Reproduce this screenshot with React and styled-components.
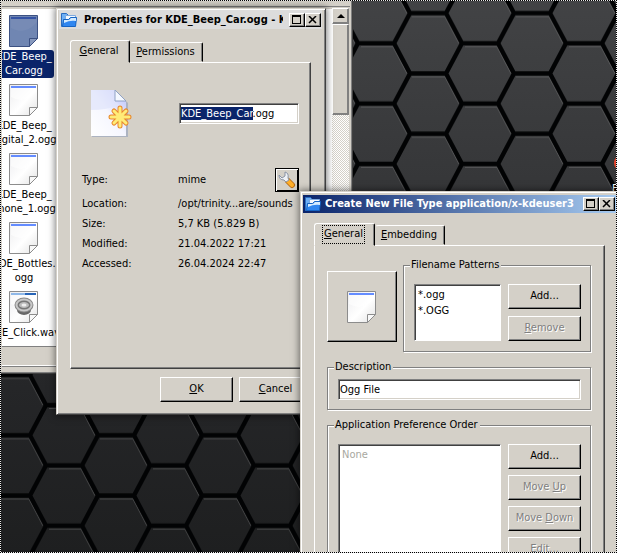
import React, { useEffect, useRef } from "react";
import styled, { createGlobalStyle, css } from "styled-components";

const face = "#d4d0c8";
const shade = "#808080";
const navy = "#0a246a";

const Global = createGlobalStyle`
  * { box-sizing: border-box; }
  html, body, #root { height: 100%; margin: 0; }
  body { overflow: hidden; background: #222; }
  body, button, input {
    font-family: "DejaVu Sans Condensed", "Noto Sans", sans-serif;
    font-size: 11px;
    line-height: 14px;
    color: #000;
  }
  h2, dl, dd, dt, ul { margin: 0; padding: 0; list-style: none; }
`;

const Desktop = styled.main`
  position: relative;
  width: 100%;
  height: 100%;
  overflow: hidden;
  background: #242527;
`;

const Wallpaper = styled.svg`
  position: absolute;
  inset: 0;
  width: 100%;
  height: 100%;
`;

const dots = (angle) => `repeating-linear-gradient(${angle}, #000 0 1px, #e8e8e8 1px 2px)`;

const Marquee = styled.div`
  position: absolute;
  inset: 0;
  pointer-events: none;
  background:
    ${dots("90deg")} top / 100% 1px no-repeat,
    ${dots("90deg")} bottom / 100% 1px no-repeat,
    ${dots("180deg")} left / 1px 100% no-repeat,
    ${dots("180deg")} right / 1px 100% no-repeat;
`;

const Window = styled.section`
  position: absolute;
  display: flex;
  flex-direction: column;
  background: ${face};
  border: 1px solid;
  border-color: ${face} #404040 #404040 ${face};
`;

const FileManager = styled(Window)`
  left: -20px;
  top: -20px;
  width: 373px;
  height: 394px;
  padding: 25px 2px 2px 21px;
  box-shadow: inset -1px -1px 0 ${shade};
`;

const Dialog = styled(Window)`
  left: 56px;
  top: 8px;
  width: 270px;
  height: 407px;
  padding: 1px 3px 12px 2px;
  box-shadow: inset 1px 1px 0 #fff, inset -1px -1px 0 ${shade}, 0 0 7px 1px rgba(0, 0, 0, 0.5);
`;

const FileTypeDialog = styled(Window)`
  left: 300px;
  top: 191px;
  right: -2px;
  height: 410px;
  padding: 3px 2px 11px;
  box-shadow: inset 1px 1px 0 #fff, 0 0 7px 1px rgba(0, 0, 0, 0.5);
`;

const Viewport = styled.div`
  display: flex;
  height: 340px;
  flex: none;
  border-top: 1px solid ${shade};
  box-shadow: 0 1px 0 ${shade};
`;

const FileList = styled.ul`
  flex: 1;
  min-width: 0;
  overflow: hidden;
  background: #fff;
  border-top: 2px solid ${face};
`;

const FileItem = styled.li`
  display: flex;
  flex-direction: column;
  align-items: center;
  gap: 3px;
  width: 62px;
  height: 69px;
  margin-left: -9px;
  padding-top: 6px;
`;

const FileLabel = styled.span`
  padding: 0 2px;
  text-align: center;
  white-space: pre;
  border-radius: 3px;
  ${(p) => p.$selected && css`background: ${navy}; color: #fff;`}
`;

const StatusBar = styled.div`
  height: 19px;
  margin-top: 1px;
  border-bottom: 1px solid #fff;
  box-shadow: 0 1px 0 ${shade};
`;

const ScrollBar = styled.div`
  display: flex;
  flex-direction: column;
  width: 17px;
  margin: 1px 1px 0 0;
  background: repeating-conic-gradient(#fff 0 25%, ${face} 0 50%) 0 0 / 2px 2px;
`;

const bevel = css`
  background: ${face};
  border: 1px solid;
  border-color: #fff #000 #000 #fff;
  box-shadow: inset -1px -1px 0 ${shade};
`;

const ScrollButton = styled.button`
  ${bevel}
  display: grid;
  place-items: center;
  height: 16px;
  padding: 0;
  border-color: #fff ${shade} ${shade} #fff;
`;

const ScrollThumb = styled.div`
  ${bevel}
  height: 91px;
  border-color: #fff ${shade} ${shade} #fff;
`;

const TitleBar = styled.header`
  display: flex;
  flex: none;
  align-items: center;
  gap: ${(p) => (p.$active ? 3 : 6)}px;
  height: ${(p) => (p.$active ? 18 : 19)}px;
  padding: 0 1px 0 2px;
  color: ${(p) => (p.$active ? "#fff" : "#000")};
  background: ${(p) => (p.$active ? `linear-gradient(90deg, ${navy}, #a6caf0)` : "#dcdcdc")};
`;

const Title = styled.h2`
  flex: 1;
  min-width: 0;
  overflow: hidden;
  white-space: nowrap;
  font-size: 11px;
  font-weight: bold;
  line-height: 16px;
`;

const TitleButtons = styled.div`
  display: flex;
`;

const TitleButton = styled.button`
  ${bevel}
  display: grid;
  place-items: center;
  width: 16px;
  height: 14px;
  padding: 0;
`;

const Tabs = styled.div`
  display: flex;
  align-items: flex-end;
  height: 22px;
  margin: ${(p) => p.$top}px 11px 0;
  flex: none;
`;

const Tab = styled.button`
  position: relative;
  flex: none;
  width: ${(p) => p.$width}px;
  height: ${(p) => (p.$selected ? 22 : 20)}px;
  padding: 0 2px 0 0;
  background: ${face};
  border: 1px solid;
  border-color: #fff #000 transparent #fff;
  border-radius: 3px 2px 0 0;
  box-shadow: inset -1px 0 0 ${shade};
  ${(p) => p.$selected && css`
    z-index: 1;
    height: 23px;
    margin-bottom: -1px;
    border-bottom-color: ${face};
  `}
  ${(p) => !p.$selected && css`border-left-color: ${face};`}
`;

const TabText = styled.span`
  display: inline-block;
  padding: 1px 1px 2px;
  outline: ${(p) => (p.$focus ? "1px dotted #000" : "none")};
`;

const Panel = styled.div`
  flex: 1;
  margin: 0 11px;
  border: 1px solid;
  border-color: #fff #404040 #404040 #fff;
  box-shadow: inset -1px -1px 0 ${shade};
`;

const PropertiesPanel = styled(Panel)`
  padding: 27px 11px 0 11px;
`;

const NameRow = styled.div`
  display: flex;
  justify-content: space-between;
  padding-left: 9px;
  height: 75px;
`;

const TextBox = styled.input`
  width: ${(p) => p.$width};
  height: 21px;
  padding: 0 1px;
  background: #fff;
  border: 1px solid;
  border-color: ${shade} #fff #fff ${shade};
  border-radius: 0;
  outline: none;
  box-shadow: inset 1px 1px 0 #404040, inset -1px -1px 0 ${face};
  &::selection { background: ${navy}; color: #fff; }
`;

const NameBox = styled(TextBox)`
  margin-top: 13px;
`;

const Facts = styled.dl`
  display: grid;
  grid-template-columns: 96px 1fr;
  grid-template-rows: 29px repeat(4, 20px);
  align-items: center;
  white-space: nowrap;
`;

const TypeValue = styled.dd`
  display: flex;
  align-items: center;
  justify-content: space-between;
`;

const WrenchButton = styled.button`
  ${bevel}
  display: grid;
  place-items: center;
  width: 24px;
  height: 24px;
  padding: 0;
  border: 1px solid #000;
  box-shadow: inset 1px 1px 0 #fff, inset -1px -1px 0 #000;
`;

const DialogButtons = styled.footer`
  display: flex;
  justify-content: flex-end;
  gap: 6px;
  margin: 8px 10px 0;
`;

const PushButton = styled.button`
  ${bevel}
  width: 73px;
  height: 25px;
  padding: 0 0 1px;
  &:disabled {
    color: ${shade};
    text-shadow: 1px 1px 0 #fff;
  }
`;

const TypePanel = styled(Panel)`
  display: flex;
  flex-direction: column;
  gap: 8px;
  padding: 12px 13px 0 12px;
`;

const TopRow = styled.div`
  display: flex;
  align-items: flex-start;
  gap: 6px;
`;

const IconButton = styled.button`
  ${bevel}
  display: grid;
  place-items: center;
  flex: none;
  width: 70px;
  height: 71px;
  margin-top: 13px;
  padding: 0;
`;

const Group = styled.fieldset`
  flex: ${(p) => p.$flex || "none"};
  min-width: 0;
  margin: 0;
  padding: ${(p) => p.$pad};
  border: 1px solid ${shade};
  box-shadow: 1px 1px 0 #fff, inset 1px 1px 0 #fff;
`;

const Legend = styled.legend`
  margin-left: -4px;
  padding: 0 2px 0 1px;
  background: ${face};
`;

const GroupRow = styled.div`
  display: flex;
  gap: 7px;
`;

const ListBox = styled.ul`
  flex: 1;
  min-width: 0;
  height: ${(p) => p.$height}px;
  && { padding: 2px 3px; }
  background: #fff;
  border: 1px solid;
  border-color: ${shade} #fff #fff ${shade};
  box-shadow: inset 1px 1px 0 #404040;
`;

const ListItem = styled.li`
  line-height: 16px;
  color: ${(p) => (p.$muted ? "#a8a8a0" : "#000")};
`;

const ButtonStack = styled.div`
  display: flex;
  flex-direction: column;
  gap: ${(p) => p.$gap}px;
`;

const Shortcut = styled.div`
  position: absolute;
  left: 612px;
  top: 154px;
  display: flex;
  flex-direction: column;
  gap: 10px;
  width: 30px;
  color: #fff;
`;

function PaperIcon({ selected, sound }) {
  const stroke = selected ? "#3c5182" : "#8c8c8c";
  return (
    <svg width="32" height="32" viewBox="0 0 32 32" aria-hidden="true">
      <defs>
        <linearGradient id="paper" x1="0" y1="0" x2="1" y2="1">
          <stop offset="0" stopColor="#ececee" />
          <stop offset=".55" stopColor="#fff" />
          <stop offset="1" stopColor="#e2e2e2" />
        </linearGradient>
      </defs>
      <path d="M1.500 .5H29.500V23.500L21.500 31.500H1.500Z" fill={selected ? "#7086b2" : "url(#paper)"} stroke={stroke} />
      <path d="M3 13Q17 21 29 7V4H3Z" fill={selected ? "#7c90b8" : "#fff"} opacity=".6" />
      <path d="M3 2H28V4H3Z" fill={selected ? "#3553a4" : sound ? "#2865b8" : "#648cff"} />
      {sound && <path d="M3 2H17V4H3Z" fill="#8fb8e8" />}
      <path d="M21.500 31.500V23.500H29.500Z" fill={selected ? "#8799bd" : "#f8f8f8"} stroke={stroke} />
      {sound && (
        <g>
          <ellipse cx="16" cy="19" rx="7" ry="5" fill="#666" />
          <ellipse cx="16" cy="14" rx="9.500" ry="7.500" fill="#888" />
          <ellipse cx="16" cy="14" rx="8.500" ry="6.500" fill="#c8c8c8" />
          <ellipse cx="16" cy="14" rx="6.500" ry="4.500" fill="#777" />
          <ellipse cx="16" cy="14" rx="5" ry="3" fill="#bbb" />
          <ellipse cx="16" cy="14" rx="2.500" ry="1.500" fill="#eee" />
        </g>
      )}
    </svg>
  );
}

function NewDocumentIcon() {
  return (
    <svg width="42" height="48" viewBox="0 0 42 48" aria-hidden="true">
      <defs>
        <linearGradient id="doc" x1="0" y1="1" x2="1" y2="0">
          <stop offset="0" stopColor="#fff" />
          <stop offset=".5" stopColor="#f5f6ff" />
          <stop offset="1" stopColor="#b9c0fa" />
        </linearGradient>
      </defs>
      <path d="M1 1H25L37 13V47H1Z" fill="#9ba7bd" opacity=".7" />
      <path d="M0 0H24L35 12V46H0Z" fill="url(#doc)" />
      <path d="M0 0H24V12L29 15Q16 20 0 20Z" fill="#dfe4fb" opacity=".7" />
      <path d="M24 0V11H35Z" fill="#f4f8ff" stroke="#90a2c4" />
      <g stroke="#e8872c" strokeWidth="5" strokeLinecap="round">
        <path d="M29 18V36M20 27H38M23 21L35 33M35 21L23 33" />
      </g>
      <g stroke="#ffec78" strokeWidth="3" strokeLinecap="round">
        <path d="M29 18V36M20 27H38M23 21L35 33M35 21L23 33" />
      </g>
    </svg>
  );
}

function FolderIcon() {
  return (
    <svg width="17" height="16" viewBox="0 0 17 16" aria-hidden="true">
      <path d="M.5 1.500H5.500L7.500 3.500H13.500V14.500H.5Z" fill="#6fb0f5" stroke="#2a6cc0" />
      <path d="M4.500 3.500H14.500V10.500H4.500Z" fill="#f4f9ff" stroke="#7da9df" />
      <path d="M2.500 7.500H7.500L9.500 5.500H15.500L14.500 14.500H1.500Z" fill="#2f86f0" stroke="#1563c3" />
      <path d="M3 8H8L10 6H15V9Q9 8 3 11Z" fill="#d4ebff" />
    </svg>
  );
}

function WrenchIcon() {
  return (
    <svg width="18" height="18" viewBox="0 0 18 18" aria-hidden="true">
      <path d="M10 10L14 14" stroke="#b66b16" strokeWidth="6" strokeLinecap="round" />
      <path d="M10 10L14 14" stroke="#ffae28" strokeWidth="4" strokeLinecap="round" />
      <path d="M1 4L4 7L7 5V1Q11 2 10 7L11 9L8 11L6 9Q1 9 1 4Z" fill="#eef1f6" stroke="#8993a5" />
    </svg>
  );
}

function WindowButtons() {
  return (
    <TitleButtons>
      <TitleButton aria-label="Maximize">
        <svg width="10" height="10" viewBox="0 0 10 10"><path d="M0 0H9V9H0ZM1 2V8H8V2Z" fillRule="evenodd" /></svg>
      </TitleButton>
      <TitleButton aria-label="Close">
        <svg width="10" height="8" viewBox="0 0 10 8"><path d="M1 0L8 7M8 0L1 7" stroke="#000" strokeWidth="1.500" /></svg>
      </TitleButton>
    </TitleButtons>
  );
}

function Hexagons() {
  return (
    <Wallpaper aria-hidden="true">
      <defs>
        <linearGradient id="fade" x1="0" y1="0" x2="0" y2="1">
          <stop offset="0" stopColor="#424345" />
          <stop offset=".35" stopColor="#353638" />
          <stop offset=".7" stopColor="#252628" />
          <stop offset="1" stopColor="#1e1f20" />
        </linearGradient>
        <pattern id="hex" x="46" y="-17" width="104" height="60.300" patternUnits="userSpaceOnUse">
          <path d="M3 3.500H35L49 30.200M54 33.700H87L101 60.300" fill="none" stroke="#8a8a8a" strokeOpacity=".38" />
          <path
            d="M-16 30.150L0 0H36L52 30.150H88L104 0H110M-16 30.150L0 60.300H36L52 30.150M88 30.150L104 60.300H110"
            fill="none"
            stroke="#020304"
            strokeWidth="4.500"
          />
        </pattern>
      </defs>
      <rect width="100%" height="100%" fill="url(#fade)" />
      <rect width="100%" height="100%" fill="url(#hex)" />
    </Wallpaper>
  );
}

const files = [
  { name: "KDE_Beep_\nCar.ogg", selected: true },
  { name: "KDE_Beep_\nDigital_2.ogg" },
  { name: "KDE_Beep_\nPhone_1.ogg" },
  { name: "KDE_Bottles.\nogg" },
  { name: "KDE_Click.wav", sound: true },
];

const facts = [
  ["Location:", "/opt/trinity...are/sounds"],
  ["Size:", "5,7 KB (5.829 B)"],
  ["Modified:", "21.04.2022 17:21"],
  ["Accessed:", "26.04.2024 22:47"],
];

export default function App() {
  const nameRef = useRef(null);
  useEffect(() => {
    nameRef.current.focus();
    nameRef.current.setSelectionRange(0, "KDE_Beep_Car".length);
  }, []);

  return (
    <Desktop>
      <Global />
      <Hexagons />
      <Shortcut>
        <svg width="18" height="18" viewBox="0 0 18 18" aria-hidden="true">
          <circle cx="10" cy="9" r="8" fill="#e8442c" />
          <path d="M5 4V14L12 9Z" fill="#28b8c8" />
        </svg>
        <span>F</span>
      </Shortcut>

      <FileManager aria-label="Files">
        <Viewport>
          <FileList>
            {files.map((f) => (
              <FileItem key={f.name}>
                <PaperIcon selected={f.selected} sound={f.sound} />
                <FileLabel $selected={f.selected}>{f.name}</FileLabel>
              </FileItem>
            ))}
          </FileList>
          <ScrollBar>
            <ScrollButton aria-label="Scroll up">
              <svg width="8" height="4" viewBox="0 0 8 4"><path d="M0 4L4 0L8 4Z" /></svg>
            </ScrollButton>
            <ScrollThumb />
          </ScrollBar>
        </Viewport>
        <StatusBar />
      </FileManager>

      <Dialog aria-label="Properties">
        <TitleBar>
          <FolderIcon />
          <Title>Properties for KDE_Beep_Car.ogg - Konqueror</Title>
          <WindowButtons />
        </TitleBar>
        <Tabs role="tablist" $top={11}>
          <Tab role="tab" aria-selected="true" $selected $width={60}><TabText><u>G</u>eneral</TabText></Tab>
          <Tab role="tab" $width={73}><TabText><u>P</u>ermissions</TabText></Tab>
        </Tabs>
        <PropertiesPanel>
          <NameRow>
            <NewDocumentIcon />
            <NameBox ref={nameRef} $width="120px" aria-label="Name" defaultValue="KDE_Beep_Car.ogg" />
          </NameRow>
          <Facts>
            <dt>Type:</dt>
            <TypeValue>
              mime
              <WrenchButton aria-label="Edit file type"><WrenchIcon /></WrenchButton>
            </TypeValue>
            {facts.map(([label, value]) => (
              <React.Fragment key={label}>
                <dt>{label}</dt>
                <dd>{value}</dd>
              </React.Fragment>
            ))}
          </Facts>
        </PropertiesPanel>
        <DialogButtons>
          <PushButton><u>O</u>K</PushButton>
          <PushButton><u>C</u>ancel</PushButton>
        </DialogButtons>
      </Dialog>

      <FileTypeDialog aria-label="Create New File Type">
        <TitleBar $active>
          <FolderIcon />
          <Title>Create New File Type application/x-kdeuser3</Title>
          <WindowButtons />
        </TitleBar>
        <Tabs role="tablist" $top={10}>
          <Tab role="tab" aria-selected="true" $selected $width={61}><TabText $focus><u>G</u>eneral</TabText></Tab>
          <Tab role="tab" $width={70}><TabText><u>E</u>mbedding</TabText></Tab>
        </Tabs>
        <TypePanel>
          <TopRow>
            <IconButton aria-label="Choose icon"><PaperIcon /></IconButton>
            <Group $flex="1" $pad="12px 9px 10px 10px">
              <Legend>Filename Patterns</Legend>
              <GroupRow>
                <ListBox $height={57}>
                  <ListItem>*.ogg</ListItem>
                  <ListItem>*.OGG</ListItem>
                </ListBox>
                <ButtonStack $gap={7}>
                  <PushButton>Add...</PushButton>
                  <PushButton disabled><u>R</u>emove</PushButton>
                </ButtonStack>
              </GroupRow>
            </Group>
          </TopRow>
          <Group $pad="5px 9px 9px 10px">
            <Legend>Description</Legend>
            <TextBox $width="100%" aria-label="Description" defaultValue="Ogg File" />
          </Group>
          <Group $pad="12px 9px 10px 10px">
            <Legend>Application Preference Order</Legend>
            <GroupRow>
              <ListBox $height={150}>
                <ListItem $muted>None</ListItem>
              </ListBox>
              <ButtonStack $gap={6}>
                <PushButton>Add...</PushButton>
                <PushButton disabled>Move <u>U</u>p</PushButton>
                <PushButton disabled>Move <u>D</u>own</PushButton>
                <PushButton disabled><u>E</u>dit...</PushButton>
              </ButtonStack>
            </GroupRow>
          </Group>
        </TypePanel>
      </FileTypeDialog>
      <Marquee />
    </Desktop>
  );
}
